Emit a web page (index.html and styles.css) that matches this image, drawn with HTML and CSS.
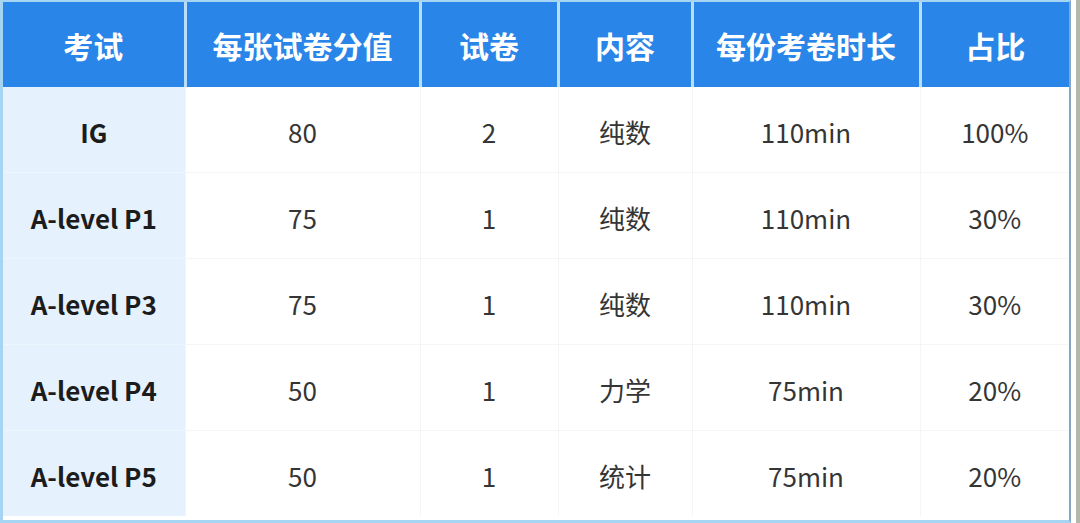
FILE: index.html
```html
<!DOCTYPE html>
<html lang="zh-CN">
<head>
<meta charset="utf-8">
<title>考试</title>
<link rel="stylesheet" href="styles.css">
</head>
<body>
<div class="page">
  <div class="frame">
    <table class="exam">
      <colgroup>
        <col class="c1"><col class="c2"><col class="c3"><col class="c4"><col class="c5"><col class="c6">
      </colgroup>
      <thead>
        <tr><th>考试</th><th>每张试卷分值</th><th>试卷</th><th>内容</th><th>每份考卷时长</th><th>占比</th></tr>
      </thead>
      <tbody>
        <tr><td class="name">IG</td><td>80</td><td>2</td><td>纯数</td><td>110min</td><td>100%</td></tr>
        <tr><td class="name">A-level P1</td><td>75</td><td>1</td><td>纯数</td><td>110min</td><td>30%</td></tr>
        <tr><td class="name">A-level P3</td><td>75</td><td>1</td><td>纯数</td><td>110min</td><td>30%</td></tr>
        <tr><td class="name">A-level P4</td><td>50</td><td>1</td><td>力学</td><td>75min</td><td>20%</td></tr>
        <tr><td class="name">A-level P5</td><td>50</td><td>1</td><td>统计</td><td>75min</td><td>20%</td></tr>
      </tbody>
    </table>
  </div>
  <div class="edge"></div>
</div>
</body>
</html>
```
FILE: styles.css
```css
html, body {
  margin: 0;
  padding: 0;
  background: #ffffff;
}
.page {
  display: flex;
  width: 1080px;
  height: 523px;
  overflow: hidden;
}
.frame {
  width: 1066px;
  height: 518px;
  border-left: 3px solid #a6d5f4;
  border-top: 2px solid #a6d5f4;
  border-bottom: 3px solid #a6d5f4;
  border-right: 2px solid #86a6c8;
  box-shadow: 0 1px 0 #8aa6c6;
  flex: none;
  overflow: hidden;
}
.edge {
  width: 4px;
  margin-left: 5px;
  height: 523px;
  background: #b3b9aa;
  flex: none;
}
.exam {
  width: 1066px;
  border-collapse: collapse;
  table-layout: fixed;
  font-family: "Noto Sans CJK SC", "Noto Sans", sans-serif;
}
.c1 { width: 182px; }
.c2 { width: 235px; }
.c3 { width: 138px; }
.c4 { width: 134px; }
.c5 { width: 228px; }
.c6 { width: 149px; }
.exam th {
  height: 85px;
  padding: 0;
  background: #2a85e8;
  color: #ffffff;
  font-size: 30px;
  font-weight: 700;
  text-align: center;
  border-left: 3px solid #b9ddfa;
}
.exam th:first-child { border-left: none; }
.exam td {
  height: 82px;
  padding: 3px 0 0;
  text-align: center;
  font-size: 26px;
  color: #353535;
  background: #ffffff;
  border-top: 1px solid #f3f5f7;
  border-left: 1px solid #f3f5f7;
}
.exam tbody tr:first-child td { border-top: none; }
.exam td.name {
  background: #e5f1fc;
  color: #1c1c1c;
  font-weight: 700;
  border-left: none;
  border-top: 1px solid #eef6fd;
}
```
